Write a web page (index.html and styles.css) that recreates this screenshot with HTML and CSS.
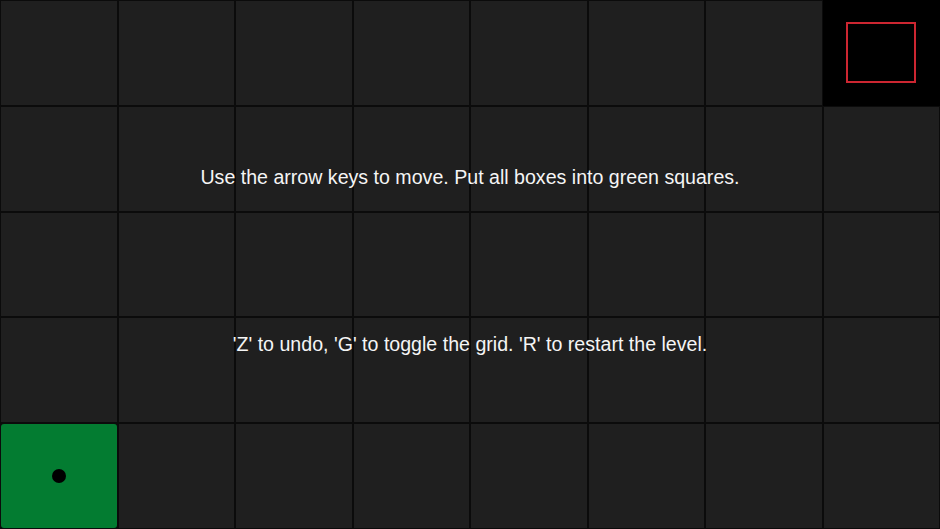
FILE: index.html
```html
<!DOCTYPE html>
<html>
<head>
<meta charset="utf-8">
<link rel="stylesheet" href="styles.css">
</head>
<body>
<div class="stage">
  <div class="board">
    <div class="cell"></div><div class="cell"></div><div class="cell"></div><div class="cell"></div>
    <div class="cell"></div><div class="cell"></div><div class="cell"></div>
    <div class="cell cell-dark"><div class="target"></div></div>
    <div class="cell"></div><div class="cell"></div><div class="cell"></div><div class="cell"></div>
    <div class="cell"></div><div class="cell"></div><div class="cell"></div><div class="cell"></div>
    <div class="cell"></div><div class="cell"></div><div class="cell"></div><div class="cell"></div>
    <div class="cell"></div><div class="cell"></div><div class="cell"></div><div class="cell"></div>
    <div class="cell"></div><div class="cell"></div><div class="cell"></div><div class="cell"></div>
    <div class="cell"></div><div class="cell"></div><div class="cell"></div><div class="cell"></div>
    <div class="cell cell-goal"><div class="player"></div></div>
    <div class="cell"></div><div class="cell"></div><div class="cell"></div>
    <div class="cell"></div><div class="cell"></div><div class="cell"></div><div class="cell"></div>
  </div>
  <div class="overlay">
    <p class="msg msg-first">Use the arrow keys to move. Put all boxes into green squares.</p>
    <p class="msg msg-second">'Z' to undo, 'G' to toggle the grid. 'R' to restart the level.</p>
  </div>
</div>
</body>
</html>
```

FILE: styles.css
```css
html, body {
  margin: 0;
  padding: 0;
  background: #0b0b0b;
}
.stage {
  position: relative;
  width: 940px;
  height: 529px;
  overflow: hidden;
}
.board {
  display: grid;
  grid-template-columns: repeat(8, 1fr);
  grid-template-rows: repeat(5, 1fr);
  gap: 2px;
  padding: 1px;
  width: 940px;
  height: 529px;
  box-sizing: border-box;
  background: #0b0b0b;
}
.cell {
  background: #1f1f1f;
}
.cell-dark {
  background: #000;
  margin: -1px -1px -1px -1px;
  display: flex;
  align-items: center;
  justify-content: center;
}
.target {
  width: 66px;
  height: 57px;
  border: 2px solid #cc2631;
}
.cell-goal {
  background: #037c31;
  border-radius: 3px;
  display: flex;
  align-items: center;
  justify-content: center;
}
.player {
  width: 14px;
  height: 14px;
  border-radius: 50%;
  background: #000;
}
.overlay {
  position: absolute;
  inset: 0;
  display: flex;
  flex-direction: column;
  align-items: center;
  padding-top: 166px;
}
.msg {
  margin: 0;
  font-family: "Liberation Sans", Arial, sans-serif;
  font-size: 19.6px;
  color: #f5f5f5;
  white-space: nowrap;
}
.msg-second {
  margin-top: 144px;
}
```
